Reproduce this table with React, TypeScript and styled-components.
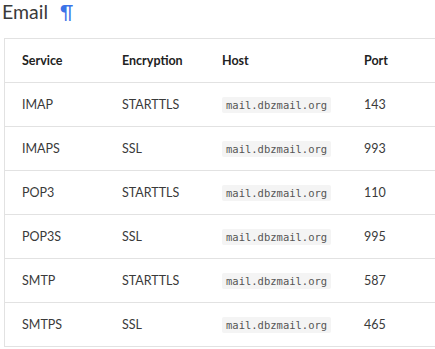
import styled, { createGlobalStyle } from "styled-components";

const GlobalStyle = createGlobalStyle`
  body {
    margin: 0;
    background: #ffffff;
    font-family: Lato, "Open Sans", sans-serif;
    color: #333;
  }
`;

const Page = styled.div`
  padding: 0 0 0 2px;
  width: 470px;
`;

const Heading = styled.h2`
  margin: 0;
  height: 38px;
  font-size: 19.5px;
  font-weight: 400;
  line-height: 23px;
  color: #3a3a3a;
  display: flex;
  align-items: baseline;
`;

const Anchor = styled.a`
  margin-left: 12px;
  color: #3b73e8;
  text-decoration: none;
  font-size: 19px;
`;

const Table = styled.table`
  margin-left: 2px;
  border-collapse: collapse;
  border: 1px solid #e2e2e2;
  width: 466px;
  font-size: 12.5px;
  table-layout: fixed;
`;

const Th = styled.th<{ w?: number }>`
  width: ${(p) => (p.w ? `${p.w - 17}px` : "auto")};
  height: 43px;
  padding: 0 0 0 17px;
  text-align: left;
  font-weight: 700;
  color: #222;
  border-bottom: 1px solid #e2e2e2;
`;

const Td = styled.td`
  height: 43px;
  padding: 0 0 0 17px;
  color: #3a3a3a;
  border-bottom: 1px solid #e2e2e2;
`;

const Code = styled.code`
  display: inline-block;
  padding: 2px 4px;
  background: #f4f4f4;
  border-radius: 2px;
  font-family: "DejaVu Sans Mono", "Liberation Mono", monospace;
  font-size: 10.5px;
  color: #555;
`;

const rows = [
  ["IMAP", "STARTTLS", "143"],
  ["IMAPS", "SSL", "993"],
  ["POP3", "STARTTLS", "110"],
  ["POP3S", "SSL", "995"],
  ["SMTP", "STARTTLS", "587"],
  ["SMTPS", "SSL", "465"],
];

export default function App() {
  return (
    <Page>
      <GlobalStyle />
      <Heading>
        Email<Anchor href="#email">¶</Anchor>
      </Heading>
      <Table>
        <thead>
          <tr>
            <Th w={100}>Service</Th>
            <Th w={100}>Encryption</Th>
            <Th w={142}>Host</Th>
            <Th>Port</Th>
          </tr>
        </thead>
        <tbody>
          {rows.map(([service, enc, port]) => (
            <tr key={service}>
              <Td>{service}</Td>
              <Td>{enc}</Td>
              <Td>
                <Code>mail.dbzmail.org</Code>
              </Td>
              <Td>{port}</Td>
            </tr>
          ))}
        </tbody>
      </Table>
    </Page>
  );
}
